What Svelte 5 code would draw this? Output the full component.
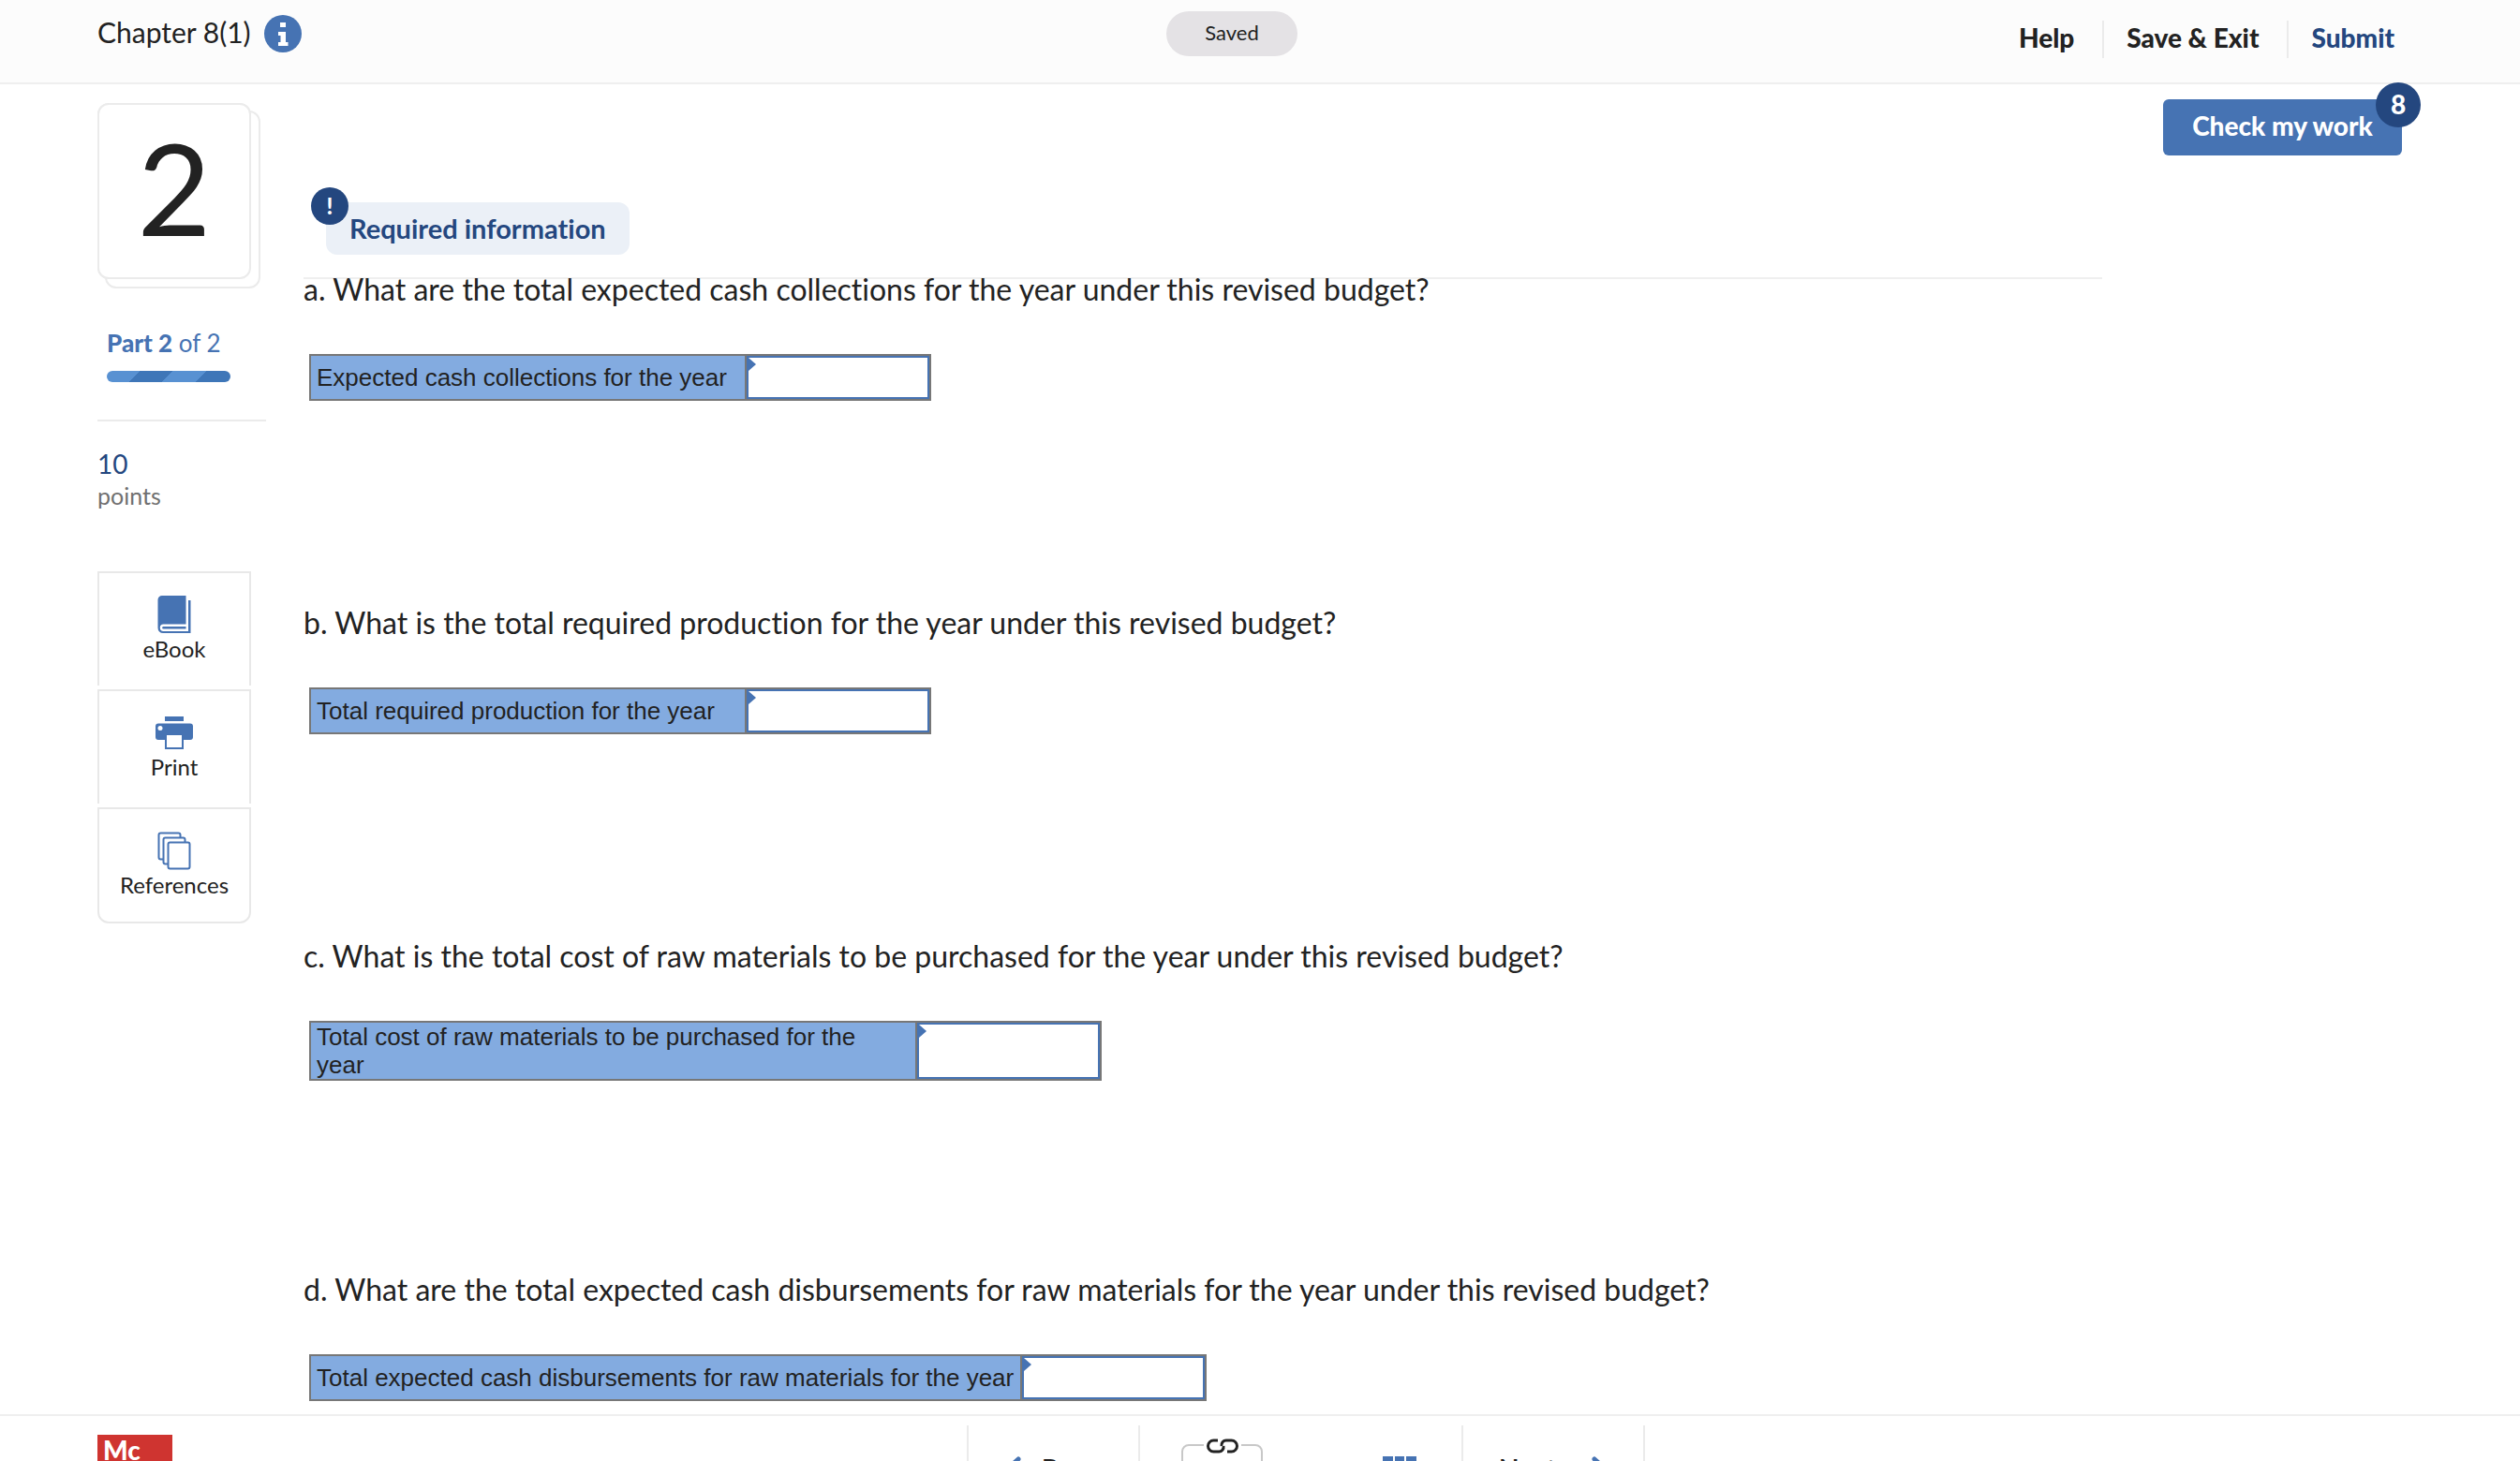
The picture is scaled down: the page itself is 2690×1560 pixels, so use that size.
<script>
  const questions = [
    {
      id: 'collections',
      text: 'a. What are the total expected cash collections for the year under this revised budget?',
      label: 'Expected cash collections for the year',
      size: 'narrow'
    },
    {
      id: 'production',
      text: 'b. What is the total required production for the year under this revised budget?',
      label: 'Total required production for the year',
      size: 'narrow'
    },
    {
      id: 'materials',
      text: 'c. What is the total cost of raw materials to be purchased for the year under this revised budget?',
      label: 'Total cost of raw materials to be purchased for the year',
      size: 'medium'
    },
    {
      id: 'disbursements',
      text: 'd. What are the total expected cash disbursements for raw materials for the year under this revised budget?',
      label: 'Total expected cash disbursements for raw materials for the year',
      size: 'wide'
    }
  ];
  let answers = $state({ collections: '', production: '', materials: '', disbursements: '' });
</script>

<div class="page">
  <header class="top">
    <div class="title">
      <h1>Chapter 8(1)</h1>
      <button class="info" aria-label="Assignment information">
        <svg viewBox="0 0 40 40">
          <circle cx="20" cy="20" r="20" fill="#4673b3" />
          <path fill="#fff" d="M17 8h6v5h-6zM15 18h8v11h2.500v4h-10.500v-4h2.500v-7h-2.500z" />
        </svg>
      </button>
    </div>
    <div class="saved" role="status">Saved</div>
    <nav>
      <a href="#help">Help</a>
      <a href="#exit">Save &amp; Exit</a>
      <a href="#submit" class="submit">Submit</a>
    </nav>
  </header>

  <div class="body">
    <aside>
      <div class="number"><span>2</span></div>
      <div class="part">
        <p><strong>Part 2</strong> of 2</p>
        <div class="progress"></div>
      </div>
      <div class="points">
        <p class="score">10</p>
        <p class="unit">points</p>
      </div>
      <div class="tools">
        <button>
          <svg viewBox="0 0 44 44" fill="#4673b3">
            <path d="M9 2H34.500V32.500H10.500a3.700 3.700 0 0 0 0 7.400H37V7h2.500V42H10A5.500 5.500 0 0 1 4.500 36.500V6.500A4.500 4.500 0 0 1 9 2z" />
            <path d="M10.500 35H34.500v2.500H10.500a1.250 1.250 0 0 1 0-2.500z" />
          </svg>
          <span>eBook</span>
        </button>
        <button>
          <svg viewBox="0 0 44 44" fill="#4673b3">
            <rect x="12" y="5" width="20" height="5" />
            <rect x="2" y="12.500" width="40" height="17.500" rx="3" />
            <circle cx="7" cy="17.500" r="2.500" fill="#fff" />
            <rect x="12" y="24" width="20" height="16" />
            <rect x="14" y="25" width="16" height="13" fill="#fff" />
          </svg>
          <span>Print</span>
        </button>
        <button>
          <svg viewBox="0 0 44 44" fill="#fff" stroke="#4673b3" stroke-width="2">
            <rect x="5.500" y="3.500" width="23" height="28" rx="2" />
            <rect x="10.500" y="8.500" width="23" height="28" rx="2" />
            <rect x="15.500" y="13.500" width="23" height="28" rx="2" />
          </svg>
          <span>References</span>
        </button>
      </div>
    </aside>

    <main>
      <div class="required">
        <h2><span class="bang" aria-hidden="true">!</span>Required information</h2>
      </div>
      {#each questions as q (q.id)}
        <section>
          <p>{q.text}</p>
          <table class={q.size}>
            <tbody>
              <tr>
                <th scope="row"><label for={q.id}>{q.label}</label></th>
                <td><input id={q.id} type="text" bind:value={answers[q.id]} /></td>
              </tr>
            </tbody>
          </table>
        </section>
      {/each}
    </main>

    <div class="actions">
      <button class="check">Check my work<span class="count">8</span></button>
    </div>
  </div>

  <footer>
    <div class="logo">Mc</div>
    <div class="pager">
      <button class="prev">
        <svg viewBox="0 0 18 26"><path d="M15 3L4 13L15 23" /></svg>
        Prev
      </button>
      <div class="middle">
        <div class="linked">
          <svg viewBox="0 0 40 16" fill="none" stroke="#222" stroke-width="3">
            <path d="M15 2H10.500a6 6 0 0 0 0 12H16a5 5 0 0 0 5-6" />
            <path d="M25 14h4.500a6 6 0 0 0 0-12H24a5 5 0 0 0-5 6" />
          </svg>
          <span>2</span>
        </div>
        <button class="grid" aria-label="All questions">
          <svg viewBox="0 0 36 36" fill="#4673b3">
            {#each [0, 13, 25] as y}
              <rect x="0" {y} width="11" height="11" />
              <rect x="13" {y} width="10" height="11" />
              <rect x="25" {y} width="11" height="11" />
            {/each}
          </svg>
        </button>
      </div>
      <button class="next">
        Next
        <svg viewBox="0 0 18 26"><path d="M3 3L14 13L3 23" /></svg>
      </button>
    </div>
  </footer>
</div>

<style>
  :global(body) {
    margin: 0;
    background: #fff;
  }
  * {
    box-sizing: border-box;
  }
  h1, h2, p {
    margin: 0;
    font-weight: 400;
  }
  button {
    margin: 0;
    padding: 0;
    border: 0;
    background: none;
    color: inherit;
    font: inherit;
    cursor: pointer;
  }
  svg {
    display: block;
  }
  .page {
    display: flex;
    flex-direction: column;
    height: 100vh;
    overflow: hidden;
    color: #222;
    font-family: 'Lato', 'Open Sans', sans-serif;
    font-variant-ligatures: none;
  }

  .top {
    flex: none;
    display: grid;
    grid-template-columns: 1fr auto 1fr;
    align-items: center;
    height: 90px;
    padding: 0 134px 16px 104px;
    border-bottom: 2px solid #efefef;
    background: #fcfcfc;
  }
  .title {
    display: flex;
    align-items: center;
    gap: 14px;
  }
  h1 {
    padding-bottom: 4px;
    font-size: 30px;
    line-height: 36px;
  }
  .info svg {
    width: 40px;
    height: 40px;
  }
  .saved {
    width: 140px;
    height: 48px;
    margin-right: 30px;
    border-radius: 24px;
    background: #e4e2e5;
    font-size: 22px;
    line-height: 46px;
    text-align: center;
  }
  nav {
    display: flex;
    justify-content: flex-end;
    margin-top: 12px;
  }
  nav a {
    padding: 0 30px 4px 24px;
    border-right: 2px solid #ebebeb;
    color: #222;
    font-size: 28px;
    font-weight: 900;
    line-height: 36px;
    text-decoration: none;
  }
  nav .submit {
    padding-right: 0;
    border-right: 0;
    color: #24477f;
  }

  /* Starts over the header's border so that the count badge is not clipped */
  .body {
    flex: 1;
    min-height: 0;
    overflow: hidden;
    display: flex;
    margin-top: -2px;
    padding: 2px 126px 0 104px;
  }
  aside {
    flex: none;
    width: 180px;
    padding-top: 20px;
  }
  .number {
    position: relative;
    z-index: 0;
    display: flex;
    align-items: center;
    justify-content: center;
    width: 164px;
    height: 188px;
    padding-bottom: 8px;
    border: 2px solid #ebebeb;
    border-radius: 12px;
    background: #fff;
    font-size: 136px;
    line-height: 164px;
  }
  .number::before,
  .number::after {
    content: '';
    position: absolute;
    z-index: -1;
    border: 2px solid #ebebeb;
    border-radius: 12px;
    background: #fff;
  }
  .number::before {
    inset: 6px -12px -12px 6px;
  }
  .number::after {
    inset: -2px;
  }
  .part {
    padding: 52px 0 40px 10px;
    border-bottom: 2px solid #ebebeb;
    color: #4673b3;
    font-size: 26px;
    line-height: 32px;
  }
  .part strong {
    font-weight: 900;
  }
  .progress {
    width: 132px;
    height: 12px;
    margin-top: 14px;
    border-radius: 6px;
    background: repeating-linear-gradient(135deg, #5891d2 0 25px, #3e76b8 25px 50px);
  }
  .points {
    padding: 28px 0 64px;
    line-height: 34px;
  }
  .score {
    color: #24477f;
    font-size: 28px;
  }
  .unit {
    color: #707070;
    font-size: 25px;
  }
  .tools {
    display: flex;
    flex-direction: column;
    gap: 4px;
    width: 164px;
  }
  .tools button {
    display: flex;
    flex-direction: column;
    align-items: center;
    height: 122px;
    padding-top: 22px;
    border: 2px solid #e8e8e8;
    border-bottom: 0;
    font-size: 24px;
    line-height: 30px;
  }
  .tools button:last-child {
    height: 124px;
    border-bottom: 2px solid #e8e8e8;
    border-radius: 0 0 12px 12px;
  }
  .tools svg {
    width: 44px;
    height: 44px;
  }

  main {
    flex: 1;
    min-width: 0;
    margin: 0 65px 0 40px;
  }
  .required {
    padding: 126px 0 24px 24px;
    margin-bottom: -10px;
    border-bottom: 2px solid #efefef;
  }
  h2 {
    position: relative;
    width: fit-content;
    padding: 0 25px;
    border-radius: 12px;
    background: #ebf0f7;
    color: #24477f;
    font-size: 29px;
    font-weight: 700;
    line-height: 56px;
  }
  .bang {
    position: absolute;
    top: -16px;
    left: -16px;
    width: 40px;
    border-radius: 50%;
    background: #24477f;
    color: #fff;
    font-size: 24px;
    font-weight: 900;
    line-height: 40px;
    text-align: center;
  }
  section {
    min-height: 356px;
  }
  section p {
    font-size: 32px;
    line-height: 42px;
  }
  table {
    margin: 48px 0 0 6px;
    border: 2px solid #777;
    border-collapse: separate;
    border-spacing: 0;
    background: #83abe0;
    font-family: 'Liberation Sans', sans-serif;
    font-size: 26px;
    line-height: 30px;
  }
  th {
    padding: 8px 5px 8px 6px;
    border-right: 2px solid #777;
    font-weight: 400;
    text-align: left;
  }
  .narrow th {
    width: 465px;
  }
  .medium th {
    width: 647px;
    padding: 0 24px 0 6px;
  }
  .wide th {
    width: 759px;
    white-space: nowrap;
  }
  td {
    position: relative;
    width: 195px;
    height: 46px;
    padding: 0;
    background: #fff;
    border: 2px solid #4673b3;
  }
  td::before {
    content: '';
    position: absolute;
    top: 0;
    left: 0;
    border: 7px solid transparent;
    border-right-width: 0;
    border-left: 8px solid #4673b3;
  }
  input {
    display: block;
    width: 100%;
    height: 42px;
    padding: 0 12px;
    border: 0;
    outline: 0;
    background: none;
    font: inherit;
  }

  .actions {
    flex: none;
    padding-top: 16px;
  }
  .check {
    position: relative;
    width: 255px;
    height: 60px;
    padding: 0 0 4px;
    border-radius: 6px;
    background: #4673b3;
    color: #fff;
    font-size: 28px;
    font-weight: 900;
  }
  .count {
    position: absolute;
    top: -18px;
    right: -20px;
    width: 48px;
    height: 48px;
    border-radius: 50%;
    background: #24477f;
    line-height: 46px;
  }

  footer {
    flex: none;
    display: flex;
    align-items: flex-start;
    height: 50px;
    padding: 0 86px 0 104px;
    overflow: hidden;
    border-top: 2px solid #efefef;
    background: #fff;
  }
  .logo {
    flex: none;
    width: 80px;
    height: 80px;
    margin-top: 20px;
    padding-left: 6px;
    background: #cf3430;
    color: #fff;
    font-size: 28px;
    font-weight: 900;
    line-height: 32px;
  }
  .pager {
    display: flex;
    height: 92px;
    margin: 10px auto 0;
    border-left: 2px solid #ebebeb;
    font-size: 28px;
    font-weight: 700;
  }
  .prev,
  .next {
    display: flex;
    align-items: center;
    border-right: 2px solid #ebebeb;
  }
  .prev {
    width: 183px;
    padding-left: 38px;
    gap: 22px;
  }
  .next {
    width: 194px;
    padding-left: 38px;
    gap: 38px;
  }
  .prev svg,
  .next svg {
    width: 18px;
    height: 26px;
    fill: none;
    stroke: #4673b3;
    stroke-width: 5;
    stroke-linecap: round;
  }
  .middle {
    display: flex;
    align-items: flex-start;
    gap: 128px;
    width: 345px;
    padding-left: 44px;
    border-right: 2px solid #ebebeb;
  }
  .linked {
    position: relative;
    width: 87px;
    height: 80px;
    margin-top: 20px;
    border: 2px solid #c8c8c8;
    border-radius: 8px;
    color: #bbb;
    font-weight: 400;
    line-height: 54px;
    text-align: center;
  }
  .linked svg {
    position: absolute;
    top: -8px;
    left: 22px;
    width: 40px;
    height: 16px;
    background: #fff;
  }
  .grid {
    margin-top: 33px;
  }
  .grid svg {
    width: 36px;
    height: 36px;
  }
</style>
